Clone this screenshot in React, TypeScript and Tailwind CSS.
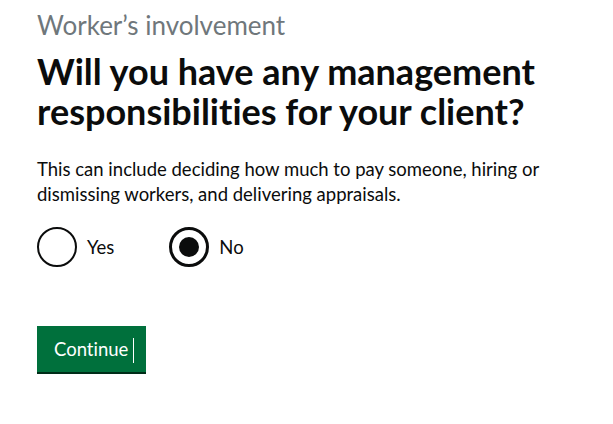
import { useState } from 'react'

const font = { fontFamily: 'Lato, "Liberation Sans", sans-serif' }

interface IRadioProps {
  label: string
  checked: boolean
  onSelect: () => void
}

function Radio({ label, checked, onSelect }: IRadioProps) {
  return (
    <label className="flex items-center cursor-pointer" onClick={onSelect}>
      <span
        className={`w-10 h-10 rounded-full border-[#0b0c0c] flex items-center justify-center ${
          checked ? 'border-[3px]' : 'border-2'
        }`}
      >
        {checked && <span className="w-5 h-5 rounded-full bg-[#0b0c0c]" />}
      </span>
      <span className="pl-[10px] text-[18.5px] leading-[25px] text-[#0b0c0c]">{label}</span>
    </label>
  )
}

export default function App() {
  const [value, setValue] = useState('no')

  return (
    <div
      className="min-h-[424px] bg-white px-[37px] pt-[11px] whitespace-nowrap [font-variant-ligatures:none]"
      style={font}
    >
      <span className="block text-[26px] leading-[28px] text-[#6f777b]">Worker’s involvement</span>
      <h1 className="mt-[12px] text-[36px] leading-[40px] font-bold text-[#0b0c0c]">
        Will you have any management <br /> responsibilities for your client?
      </h1>
      <p className="mt-[26px] text-[18.5px] leading-[25px] text-[#0b0c0c]">
        This can include deciding how much to pay someone, hiring or <br /> dismissing workers, and
        delivering appraisals.
      </p>
      <div className="mt-[20px] flex items-center gap-[55px]">
        <Radio label="Yes" checked={value === 'yes'} onSelect={() => setValue('yes')} />
        <Radio label="No" checked={value === 'no'} onSelect={() => setValue('no')} />
      </div>
      <button className="mt-[59px] flex items-center bg-[#00703c] text-white text-[18.5px] leading-[25px] pl-[17px] pr-[12px] pt-[9px] pb-[9px] shadow-[0_2px_0_#002d18]">
        Continue
        <span className="ml-[5px] mt-[3px] w-px h-[25px] bg-white" />
      </button>
    </div>
  )
}
